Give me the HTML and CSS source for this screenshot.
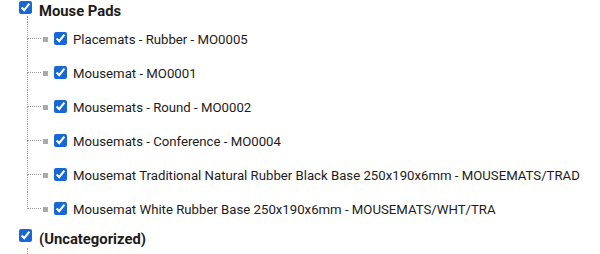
FILE: index.html
```html
<!DOCTYPE html>
<html>
<head>
<meta charset="utf-8">
<link rel="stylesheet" href="styles.css">
</head>
<body>
<ul class="tree">
  <li class="group">
    <div class="group-row">
      <input type="checkbox" class="cb" checked>
      <span class="group-label">Mouse Pads</span>
    </div>
    <div class="stem"></div>
    <ul class="kids">
      <li class="kid"><span class="branch"><span class="up"></span><span class="down"></span></span><span class="bullet"></span><input type="checkbox" class="cb kid-cb" checked><span class="kid-label">Placemats - Rubber - MO0005</span></li>
      <li class="kid"><span class="branch"><span class="up"></span><span class="down"></span></span><span class="bullet"></span><input type="checkbox" class="cb kid-cb" checked><span class="kid-label">Mousemat - MO0001</span></li>
      <li class="kid"><span class="branch"><span class="up"></span><span class="down"></span></span><span class="bullet"></span><input type="checkbox" class="cb kid-cb" checked><span class="kid-label">Mousemats - Round - MO0002</span></li>
      <li class="kid"><span class="branch"><span class="up"></span><span class="down"></span></span><span class="bullet"></span><input type="checkbox" class="cb kid-cb" checked><span class="kid-label">Mousemats - Conference - MO0004</span></li>
      <li class="kid"><span class="branch"><span class="up"></span><span class="down"></span></span><span class="bullet"></span><input type="checkbox" class="cb kid-cb" checked><span class="kid-label">Mousemat Traditional Natural Rubber Black Base 250x190x6mm - MOUSEMATS/TRAD</span></li>
      <li class="kid last"><span class="branch"><span class="up"></span><span class="down"></span></span><span class="bullet"></span><input type="checkbox" class="cb kid-cb" checked><span class="kid-label">Mousemat White Rubber Base 250x190x6mm - MOUSEMATS/WHT/TRA</span></li>
    </ul>
  </li>
  <li class="group uncat">
    <div class="group-row">
      <input type="checkbox" class="cb" checked>
      <span class="group-label">(Uncategorized)</span>
    </div>
    <div class="stem tail"></div>
  </li>
</ul>
</body>
</html>
```

FILE: styles.css
```css
html, body {
  margin: 0;
  padding: 0;
  background: #ffffff;
}

body {
  font-family: Roboto, "Liberation Sans", Arial, sans-serif;
  font-size: 13.2px;
  line-height: 16px;
  color: #1c1c1c;
  width: 600px;
  height: 254px;
  overflow: hidden;
}

.tree,
.kids {
  list-style: none;
  margin: 0;
  padding: 0;
}

.cb {
  width: 13px;
  height: 13px;
  margin: 0;
  flex: none;
  accent-color: #1967d2;
}

.group-row {
  display: flex;
  align-items: flex-start;
  height: 16px;
  padding-left: 19px;
}

.group-row .cb {
  margin-top: 1px;
}

.group-label {
  margin-left: 7px;
  margin-top: 3px;
  font-weight: 700;
  font-size: 14.8px;
  line-height: 16px;
  white-space: nowrap;
}

.stem {
  height: 6px;
  margin-left: 27px;
  border-left: 1px dotted #9a9a9a;
}

.kids {
  margin-left: 27px;
}

.kid {
  display: flex;
  align-items: flex-start;
  height: 34px;
}

.branch {
  display: flex;
  flex-direction: column;
  width: 14px;
  flex: none;
}

.up {
  height: 16px;
  border-left: 1px dotted #9a9a9a;
  border-bottom: 1px dotted #9a9a9a;
}

.down {
  height: 17px;
  border-left: 1px dotted #9a9a9a;
}

.kid.last .down {
  border-left-color: transparent;
}

.bullet {
  width: 5px;
  height: 5px;
  margin-left: 2px;
  margin-top: 15px;
  background: #aaaaaa;
  flex: none;
}

.kid-cb {
  margin-left: 6px;
  margin-top: 10px;
}

.kid-label {
  margin-left: 6px;
  margin-top: 10px;
  white-space: nowrap;
}

.uncat .group-row {
  margin-top: 3px;
}

.uncat .group-row .cb {
  margin-top: 0;
}

.uncat .group-label {
  margin-top: 2px;
}

.stem.tail {
  height: 6px;
  margin-top: 3px;
}
```
